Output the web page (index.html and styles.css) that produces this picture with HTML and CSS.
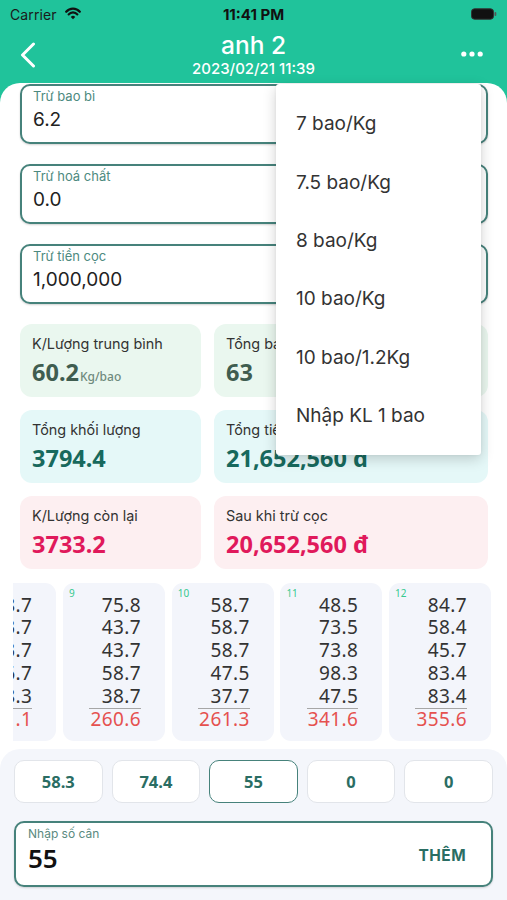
FILE: index.html
```html
<!DOCTYPE html>
<html lang="vi">
<head>
<meta charset="utf-8">
<title>anh 2</title>
<link rel="stylesheet" href="styles.css">
</head>
<body>
<div class="screen">
  <header class="header">
    <div class="status">
      <div class="status-left">
        <span class="carrier">Carrier</span>
        <svg class="wifi" width="18" height="13" viewBox="0 0 18 13">
          <path d="M2.2 4.7 A9 9 0 0 1 15.8 4.7" fill="none" stroke="#111" stroke-width="2.3" stroke-linecap="round"/>
          <path d="M4.7 7.4 A5.5 5.5 0 0 1 13.3 7.4" fill="none" stroke="#111" stroke-width="2.3" stroke-linecap="round"/>
          <path d="M9 12.3 L6.8 9.9 A3 3 0 0 1 11.2 9.9 Z" fill="#111"/>
        </svg>
      </div>
      <div class="time">11:41 PM</div>
      <div class="status-right">
        <svg class="battery" width="26" height="12" viewBox="0 0 26 12">
          <rect x="0.5" y="0.8" width="22" height="10.4" rx="3" fill="#111" stroke="#333" stroke-width="1"/>
          <rect x="23.5" y="4" width="1.8" height="4" rx="0.9" fill="#555"/>
        </svg>
      </div>
    </div>
    <div class="nav">
      <div class="nav-left">
        <svg class="back" width="16" height="26" viewBox="0 0 16 26">
          <path d="M13.5 2 L2.5 13 L13.5 24" fill="none" stroke="#fff" stroke-width="3" stroke-linecap="round" stroke-linejoin="round"/>
        </svg>
      </div>
      <div class="title">
        <div class="title-main">anh 2</div>
        <div class="title-sub">2023/02/21 11:39</div>
      </div>
      <div class="nav-right">
        <svg class="more" width="22" height="6" viewBox="0 0 22 6">
          <circle cx="2.8" cy="3" r="2.6" fill="#fff"/>
          <circle cx="11" cy="3" r="2.6" fill="#fff"/>
          <circle cx="19.2" cy="3" r="2.6" fill="#fff"/>
        </svg>
      </div>
    </div>
  </header>

  <main class="sheet">
    <section class="fields">
      <div class="field">
        <div class="field-label">Trừ bao bì</div>
        <div class="field-value">6.2</div>
      </div>
      <div class="field">
        <div class="field-label">Trừ hoá chất</div>
        <div class="field-value">0.0</div>
      </div>
      <div class="field">
        <div class="field-label">Trừ tiền cọc</div>
        <div class="field-value">1,000,000</div>
      </div>
    </section>

    <section class="stats">
      <div class="stat stat-green">
        <div class="stat-label">K/Lượng trung bình</div>
        <div class="stat-value">60.2<span class="stat-unit">Kg/bao</span></div>
      </div>
      <div class="stat stat-green">
        <div class="stat-label">Tổng bao</div>
        <div class="stat-value">63</div>
      </div>
      <div class="stat stat-cyan">
        <div class="stat-label">Tổng khối lượng</div>
        <div class="stat-value">3794.4</div>
      </div>
      <div class="stat stat-cyan">
        <div class="stat-label">Tổng tiền</div>
        <div class="stat-value">21,652,560 đ</div>
      </div>
      <div class="stat stat-pink">
        <div class="stat-label">K/Lượng còn lại</div>
        <div class="stat-value">3733.2</div>
      </div>
      <div class="stat stat-pink">
        <div class="stat-label">Sau khi trừ cọc</div>
        <div class="stat-value">20,652,560 đ</div>
      </div>
    </section>

    <section class="cols-wrap">
      <div class="cols">
        <div class="col">
          <span class="col-index">8</span>
          <div class="col-num">58.7</div>
          <div class="col-num">43.7</div>
          <div class="col-num">73.7</div>
          <div class="col-num">46.7</div>
          <div class="col-num">38.3</div>
          <div class="col-total"><span>261.1</span></div>
        </div>
        <div class="col">
          <span class="col-index">9</span>
          <div class="col-num">75.8</div>
          <div class="col-num">43.7</div>
          <div class="col-num">43.7</div>
          <div class="col-num">58.7</div>
          <div class="col-num">38.7</div>
          <div class="col-total"><span>260.6</span></div>
        </div>
        <div class="col">
          <span class="col-index">10</span>
          <div class="col-num">58.7</div>
          <div class="col-num">58.7</div>
          <div class="col-num">58.7</div>
          <div class="col-num">47.5</div>
          <div class="col-num">37.7</div>
          <div class="col-total"><span>261.3</span></div>
        </div>
        <div class="col">
          <span class="col-index">11</span>
          <div class="col-num">48.5</div>
          <div class="col-num">73.5</div>
          <div class="col-num">73.8</div>
          <div class="col-num">98.3</div>
          <div class="col-num">47.5</div>
          <div class="col-total"><span>341.6</span></div>
        </div>
        <div class="col">
          <span class="col-index">12</span>
          <div class="col-num">84.7</div>
          <div class="col-num">58.4</div>
          <div class="col-num">45.7</div>
          <div class="col-num">83.4</div>
          <div class="col-num">83.4</div>
          <div class="col-total"><span>355.6</span></div>
        </div>
      </div>
    </section>

    <section class="panel">
      <div class="chips">
        <div class="chip">58.3</div>
        <div class="chip">74.4</div>
        <div class="chip chip-active">55</div>
        <div class="chip">0</div>
        <div class="chip">0</div>
      </div>
      <div class="entry">
        <div class="entry-main">
          <div class="entry-label">Nhập số cân</div>
          <div class="entry-value">55</div>
        </div>
        <div class="entry-action">THÊM</div>
      </div>
    </section>
  </main>

  <div class="menu">
    <div class="menu-item">7 bao/Kg</div>
    <div class="menu-item">7.5 bao/Kg</div>
    <div class="menu-item">8 bao/Kg</div>
    <div class="menu-item">10 bao/Kg</div>
    <div class="menu-item">10 bao/1.2Kg</div>
    <div class="menu-item">Nhập KL 1 bao</div>
  </div>
</div>
</body>
</html>
```

FILE: styles.css
```css
* { box-sizing: border-box; }

html, body {
  margin: 0;
  padding: 0;
}

body {
  font-family: Inter, "Noto Sans", "Liberation Sans", sans-serif;
  color: #333;
  background: #fff;
}

.screen {
  position: relative;
  width: 507px;
  height: 900px;
  overflow: hidden;
  background: #20c39b;
  display: flex;
  flex-direction: column;
}

/* ---------- header ---------- */
.header {
  height: 83px;
  flex: none;
}

.status {
  height: 28px;
  display: grid;
  grid-template-columns: 1fr auto 1fr;
  align-items: center;
  padding: 0 10px;
}

.status-left {
  display: flex;
  align-items: center;
  gap: 7px;
}

.carrier {
  font-size: 14px;
  color: #1a1a1a;
  letter-spacing: 0.1px;
}

.wifi { display: block; margin-top: -2px; }

.time {
  font-size: 15px;
  font-weight: 700;
  color: #111;
}

.status-right {
  display: flex;
  justify-content: flex-end;
}

.battery { display: block; }

.nav {
  height: 55px;
  display: grid;
  grid-template-columns: 80px 1fr 80px;
  align-items: start;
  padding-top: 4px;
}

.nav-left {
  padding: 10px 0 0 20px;
}

.back { display: block; }

.title {
  text-align: center;
  color: #fff;
}

.title-main {
  font-size: 24.5px;
  font-weight: 500;
  line-height: 26px;
}

.title-sub {
  font-size: 15px;
  font-weight: 500;
  line-height: 18px;
  margin-top: 2px;
}

.nav-right {
  display: flex;
  justify-content: flex-end;
  padding: 19px 24px 0 0;
}

.more { display: block; }

/* ---------- sheet ---------- */
.sheet {
  flex: 1;
  background: #fff;
  border-radius: 20px 20px 0 0;
  display: flex;
  flex-direction: column;
  padding-top: 1px;
}

.fields {
  display: flex;
  flex-direction: column;
  gap: 20px;
  padding: 0 19px 0 20px;
}

.field {
  height: 60px;
  border: 2px solid #46827b;
  border-radius: 10px;
  padding: 2px 11px 0;
  box-shadow: 0 1px 2px rgba(0, 0, 0, 0.18);
  background: #fff;
}

.field-label {
  font-size: 13px;
  line-height: 16px;
  color: #4d8a80;
}

.field-value {
  font-size: 19px;
  line-height: 24px;
  margin-top: 4px;
  color: #222;
}

/* ---------- stats ---------- */
.stats {
  display: grid;
  grid-template-columns: 181px 274px;
  grid-auto-rows: 73px;
  gap: 13px;
  padding: 0 19px 0 20px;
  margin-top: 20px;
}

.stat {
  border-radius: 12px;
  padding: 11px 12px 0;
}

.stat-green { background: #eaf7ef; }
.stat-cyan { background: #e5f8f8; }
.stat-pink { background: #fdeff1; }

.stat-label {
  font-size: 14.4px;
  line-height: 18px;
  color: #333;
}

.stat-value {
  font-family: "Noto Sans", Inter, sans-serif;
  font-size: 23.5px;
  font-weight: 700;
  line-height: 28px;
  margin-top: 5px;
  white-space: nowrap;
}

.stat-green .stat-value { color: #3f5d50; }
.stat-cyan .stat-value { color: #17695d; }
.stat-pink .stat-value { color: #e0195b; }

.stat-unit {
  font-size: 12px;
  font-weight: 500;
  color: #6f8a7d;
  margin-left: 1px;
}

/* ---------- columns ---------- */
.cols-wrap {
  margin: 14px 0 0 13px;
  overflow: hidden;
}

.cols {
  display: flex;
  gap: 6.7px;
  margin-left: -58.7px;
}

.col {
  position: relative;
  flex: none;
  width: 102px;
  height: 158px;
  border-radius: 11px;
  background: #f3f5fb;
  padding: 10.6px 24px 0 0;
  text-align: right;
  font-family: "Noto Sans", Inter, sans-serif;
}

.col-index {
  position: absolute;
  top: 4px;
  left: 6px;
  font-size: 10px;
  line-height: 12px;
  color: #36c98f;
}

.col-num {
  font-size: 19px;
  line-height: 22.8px;
  color: #333;
  letter-spacing: 0.4px;
}

.col-total span {
  display: inline-block;
  border-top: 1.5px solid #a6a6a6;
  font-size: 19px;
  line-height: 21px;
  color: #e5514f;
  letter-spacing: 0.4px;
  padding-left: 1px;
}

/* ---------- bottom panel ---------- */
.panel {
  flex: 1;
  margin-top: 8px;
  background: #f4f6fb;
  border-radius: 20px 20px 0 0;
  padding: 11px 14px 0;
}

.chips {
  display: flex;
  gap: 9px;
}

.chip {
  flex: 1;
  height: 43px;
  display: flex;
  align-items: center;
  justify-content: center;
  background: #fff;
  border: 1px solid #e2e5ea;
  border-radius: 10px;
  font-family: "Noto Sans", Inter, sans-serif;
  font-size: 16.5px;
  font-weight: 700;
  color: #2a6d63;
}

.chip-active {
  border: 1.5px solid #46827b;
}

.entry {
  margin-top: 18px;
  height: 66px;
  border: 2px solid #46827b;
  border-radius: 10px;
  background: #fff;
  box-shadow: 0 1px 2px rgba(0, 0, 0, 0.15);
  display: flex;
  align-items: flex-start;
  justify-content: space-between;
  padding: 3px 25px 0 12px;
}

.entry-label {
  font-size: 12px;
  line-height: 15px;
  color: #5a8a80;
}

.entry-value {
  font-family: "Noto Sans", Inter, sans-serif;
  font-size: 26px;
  font-weight: 600;
  line-height: 30px;
  margin-top: 2px;
  color: #111;
}

.entry-action {
  margin-top: 20px;
  font-size: 15.5px;
  font-weight: 700;
  line-height: 20px;
  letter-spacing: 0.4px;
  color: #2a6d63;
}

/* ---------- dropdown menu (overlay) ---------- */
.menu {
  position: absolute;
  left: 276px;
  top: 84px;
  width: 205px;
  padding: 10.5px 0;
  background: #fff;
  border-radius: 3px;
  box-shadow: 0 4px 14px rgba(0, 0, 0, 0.18), 0 0 3px rgba(0, 0, 0, 0.06);
}

.menu-item {
  height: 58.4px;
  display: flex;
  align-items: center;
  padding-left: 20px;
  font-size: 19px;
  color: #333;
}
```
